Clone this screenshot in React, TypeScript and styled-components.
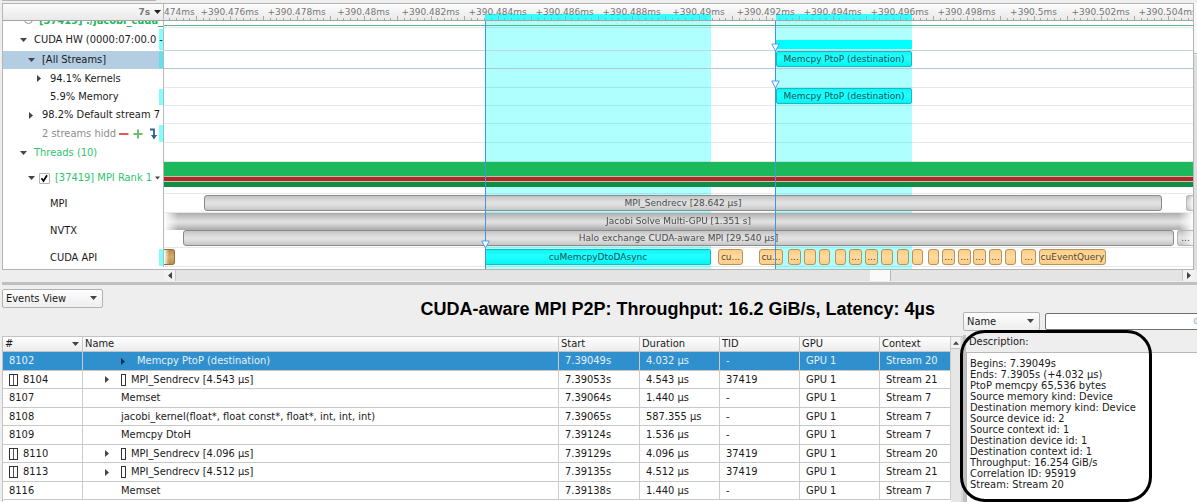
import React from "react";
import styled, { createGlobalStyle, css } from "styled-components";

const GlobalStyle = createGlobalStyle`
  * { box-sizing: border-box; }
  html, body { margin: 0; }
  body {
    background: #eeeeee;
    color: #1a1a1a;
    font: 11px/14px "DejaVu Sans Condensed", "DejaVu Sans", sans-serif;
  }
`;

/* Width of the visible time range, in scale units. */
const RANGE = 1029;
const at = (u: number) => `${(u / RANGE) * 100}%`;
const span = (from: number, to: number) => ({ left: at(from), width: at(to - from) });

const Page = styled.main`
  display: flex;
  flex-direction: column;
  min-height: 100vh;
  overflow: hidden;
`;

/* ---------- timeline ---------- */

const TopStrip = styled.div`
  height: 3px;
  background: linear-gradient(#b4b4b4, #b4b4b4) no-repeat 2px 0 / 154px 1px;
`;

const Timeline = styled.section`
  display: grid;
  grid-template-columns: minmax(0, 1fr) 3px;
  margin-left: 2px;
`;

const TimelineFrame = styled.div`
  position: relative;
  border: 1px solid #b4b4b4;
  background: #ffffff;
`;

const VerticalBar = styled.div`
  background: linear-gradient(#b0b0b0, #b0b0b0) no-repeat 0 50px / 3px 1px,
    linear-gradient(#f8f8f8 0 52px, #dedede 52px);
`;

const Split = styled.div`
  display: grid;
  grid-template-columns: 161px minmax(0, 1fr);
`;

const Ruler = styled(Split)`
  height: 17px;
  border-bottom: 1px solid #a4a4a4;
  background: linear-gradient(#fcfcfc, #e9e9e9);
`;

const RulerOrigin = styled.div`
  display: flex;
  align-items: center;
  justify-content: flex-end;
  gap: 4px;
  padding-right: 2px;
  border-right: 1px solid #b8b8b8;
  color: #777777;
  font: bold 9px/12px "DejaVu Sans", sans-serif;
`;

const Scale = styled.div`
  position: relative;
  overflow: hidden;
`;

const ScaleLabel = styled.span<{ $start?: boolean }>`
  position: absolute;
  z-index: 1;
  top: 2px;
  width: 70px;
  margin-left: ${(p) => (p.$start ? 0 : -35)}px;
  text-align: ${(p) => (p.$start ? "left" : "center")};
  color: #777777;
  font: 9px/12px "DejaVu Sans", sans-serif;
`;

const Tick = styled.i<{ $major: boolean }>`
  position: absolute;
  z-index: 1;
  bottom: 0;
  width: 1px;
  height: ${(p) => (p.$major ? 4 : 2)}px;
  background: #a8a8a8;
`;

const ScaleBand = styled.div`
  position: absolute;
  top: 10px;
  bottom: 0;
  background: #33ffff;
`;

const Rows = styled.div`
  position: relative;
  padding-bottom: 2px;
`;

const Layer = styled.div`
  position: absolute;
  inset: 0 0 0 161px;
  overflow: hidden;
  pointer-events: none;
`;

const Band = styled.div`
  position: absolute;
  top: 0;
  bottom: 0;
  background: #b0ffff;
`;

const Cursor = styled.div`
  position: absolute;
  z-index: 3;
  top: 0;
  bottom: 0;
  width: 1px;
  background: #3f96e4;
`;

const Row = styled(Split)<{ $h: number }>`
  position: relative;
  height: ${(p) => p.$h}px;
`;

const TreeCell = styled.div<{ $level: number; $selected?: boolean; $tone?: string; $mark?: string }>`
  display: flex;
  align-items: center;
  min-width: 0;
  overflow: hidden;
  padding-left: ${(p) => 13 + p.$level * 8}px;
  border-right: 1px solid #b8b8b8;
  white-space: nowrap;
  color: ${(p) => p.$tone ?? "#1a1a1a"};
  background: ${(p) => (p.$selected ? "#b3cde3" : "#ffffff")};
  ${(p) =>
    p.$mark &&
    css`
      background: linear-gradient(${p.$mark}, ${p.$mark}) no-repeat right 0 top 1px / 4px calc(100% - 2px),
        ${p.$selected ? "#b3cde3" : "#ffffff"};
    `}
`;

const TreeLabel = styled.span``;

const Arrow = styled.span`
  display: flex;
  flex: none;
  justify-content: center;
  width: 14px;
  margin-right: 4px;
`;

const RowMenu = styled.span`
  margin-left: 3px;
  line-height: 0;
`;

const CheckBox = styled.input`
  appearance: none;
  flex: none;
  width: 11px;
  height: 11px;
  margin: 0 5px 0 -3px;
  border: 1px solid #b4b4b4;
  border-radius: 1px;
  background: #ffffff
    url("data:image/svg+xml,%3Csvg xmlns='http://www.w3.org/2000/svg' viewBox='0 0 9 9'%3E%3Cpath d='M1.5 4.2 3.5 7 7 1.3' fill='none' stroke='%23000' stroke-width='1.7'/%3E%3C/svg%3E");
`;

const CutRow = styled.div`
  display: flex;
  align-items: flex-end;
  gap: 6px;
  height: 7px;
  overflow: hidden;
  padding-left: 21px;
  border-right: 1px solid #b8b8b8;
  color: #1bb95c;
  font-weight: bold;
  white-space: nowrap;
`;

const CutRing = styled.i`
  flex: none;
  width: 9px;
  height: 9px;
  margin-bottom: 4px;
  border: 1px solid #909090;
  border-radius: 50%;
`;

const Track = styled.div<{ $line?: string }>`
  position: relative;
  min-width: 0;
  overflow: hidden;
  border-bottom: 1px solid ${(p) => p.$line ?? "rgba(0, 0, 0, 0.09)"};
`;

const GreenLine = styled.div`
  height: 1px;
  margin-top: 4px;
  background: #52b787;
`;

type BarKind = "cyan" | "orange" | "brown" | "gray";

const barLook = {
  cyan: css`
    border-color: #19b9bd;
    background: linear-gradient(#12f4f4, #22ffff 40%, #08f4f4);
    color: #0c5555;
  `,
  orange: css`
    border-color: #b5935c;
    border-radius: 3px;
    background: linear-gradient(#ffcd85, #ffdaa0 50%, #ffcd85);
    color: #55452a;
  `,
  brown: css`
    border-color: #8f6f3c;
    border-left: 0;
    border-radius: 0 3px 3px 0;
    background: linear-gradient(90deg, #ffffff, rgba(255, 255, 255, 0) 5px), linear-gradient(#b98f4e, #d4ab68 50%, #b98f4e);
  `,
  gray: css`
    border-color: #8a8a8a;
    border-radius: 3px;
    background: linear-gradient(#c3c3c3, #e2e2e2 45%, #dedede 65%, #c6c6c6);
    color: #4a4a4a;
  `,
};

const Bar = styled.div<{ $kind: BarKind; $top?: number; $open?: boolean }>`
  position: absolute;
  top: ${(p) => p.$top ?? 0}px;
  height: 16px;
  border: 1px solid;
  border-radius: 2px;
  overflow: hidden;
  text-align: center;
  white-space: nowrap;
  font: 9px/14px "DejaVu Sans", sans-serif;
  ${(p) => barLook[p.$kind]}
  ${(p) =>
    p.$open &&
    css`
      border-color: #b4b4b4;
      border-right: 0;
      border-radius: 3px 0 0 3px;
      background: linear-gradient(90deg, rgba(255, 255, 255, 0) 30%, rgba(255, 255, 255, 0.8)),
        linear-gradient(#c3c3c3, #e2e2e2 45%, #dedede 65%, #c6c6c6);
    `}
`;

const WideBar = styled(Bar)`
  height: 17px;
  border-width: 1px 0;
  border-color: #b0b0b0;
  border-radius: 0;
  background: linear-gradient(#b4b4b4, #e2e2e2 50%, #dadada 65%, #b0b0b0);
  mask-image: linear-gradient(90deg, transparent, #000 14px, #000 calc(100% - 14px), transparent);
`;

const SummaryBar = styled.div`
  position: absolute;
  top: 12px;
  height: 9px;
  background: #00ffff;
`;

const Stripes = styled.div`
  height: 25px;
  background: linear-gradient(#1bb95c 0 14px, #c9b9a0 14px 15px, #a92a28 15px 19px, #d0c4b0 19px 20px, #128c43 20px);
`;

const MarkerSvg = styled.svg`
  position: absolute;
  z-index: 4;
  width: 9px;
  height: 9px;
  margin-left: -4px;
`;

const ScrollRow = styled.div`
  display: grid;
  grid-template-columns: 11px minmax(0, 1fr) 11px;
  height: 11px;
  margin: 0 3px 0 164px;
`;

const ScrollButton = styled.button`
  display: flex;
  align-items: center;
  justify-content: center;
  min-width: 0;
  padding: 0;
  border: 0;
  background: #f2f2f2;
`;

const ScrollTrack = styled.div`
  position: relative;
  border: 1px solid #c8c8c8;
  border-width: 0 1px;
  background: #e4e4e4;
`;

const ScrollThumb = styled.div`
  position: absolute;
  top: 0;
  bottom: 0;
  border-right: 1px solid #b4b4b4;
  background: #fafafa;
`;

const Divider = styled.div`
  height: 3px;
  margin: 1px 0 0 2px;
  background: #c0c0c0;
`;

/* ---------- lower half ---------- */

const Lower = styled.section`
  display: grid;
  flex: 1;
  grid-template-columns: minmax(0, 1fr) 234px;
`;

const EventsPane = styled.div`
  display: flex;
  flex-direction: column;
  min-width: 0;
  padding-left: 2px;
`;

const EventsBar = styled.div`
  display: flex;
  align-items: flex-start;
  height: 51px;
  padding-top: 4px;
`;

const SelectBox = styled.span<{ $w: number }>`
  position: relative;
  display: flex;
  flex: none;
  width: ${(p) => p.$w}px;
  height: 19px;

  svg {
    position: absolute;
    top: 7px;
    right: 6px;
    pointer-events: none;
  }
`;

const Select = styled.select`
  appearance: none;
  width: 100%;
  padding: 0 3px;
  border: 1px solid #b2b2b2;
  border-radius: 2px;
  background: linear-gradient(#fdfdfd, #eeeeee);
  color: #1a1a1a;
  font: inherit;
`;

const Title = styled.h1`
  flex: 1;
  margin: 9px 0 0;
  padding-right: 28px;
  text-align: right;
  white-space: nowrap;
  color: #000000;
  font: bold 18px/22px "Liberation Sans", sans-serif;
`;

const TableArea = styled.div`
  display: grid;
  flex: 1;
  grid-template-columns: minmax(0, 1fr) 12px;
`;

const TableFrame = styled.div`
  border: 1px solid #c4c4c4;
  border-width: 1px 0 0 1px;
  background: #ffffff;
`;

const Table = styled.table`
  width: 100%;
  table-layout: fixed;
  border-collapse: separate;
  border-spacing: 0;
`;

const HeadCell = styled.th`
  position: relative;
  height: 15px;
  padding: 0 2px;
  border-right: 1px solid #c8c8c8;
  border-bottom: 1px solid #c4c4c4;
  background: linear-gradient(#ffffff, #ececec);
  text-align: left;
  font-weight: normal;
  line-height: 14px;

  svg {
    position: absolute;
    top: 5px;
    right: 3px;
  }
`;

const BodyRow = styled.tr<{ $selected: boolean }>`
  height: 18px;
  &:nth-child(odd) { height: 19px; }
  color: ${(p) => (p.$selected ? "#e4f1fa" : "#1a1a1a")};
  background: ${(p) => (p.$selected ? "#308fcd" : "#ffffff")};
`;

const Cell = styled.td`
  padding: 0 6px;
  overflow: hidden;
  white-space: nowrap;
  border-right: 1px solid #cccccc;
  border-bottom: 1px solid #c8c8c8;
  line-height: 14px;
`;

const CellLine = styled.span<{ $indent?: number }>`
  display: flex;
  align-items: center;
  padding-left: ${(p) => p.$indent ?? 0}px;
`;

const NestArrow = styled(Arrow)`
  width: 6px;
  margin-right: 11px;
`;

const Brick = styled.i<{ $double?: boolean }>`
  display: flex;
  flex: none;
  width: ${(p) => (p.$double ? 9 : 5)}px;
  height: 12px;
  margin-right: 5px;
  border: 1px solid #333333;
  background: ${(p) => (p.$double ? "linear-gradient(#555555, #555555) no-repeat 3px 0 / 1px 100%" : "#ffffff")};
`;

const TableScroll = styled.div`
  border-top: 1px solid #c4c4c4;
  border-right: 2px solid #d8d8d8;
  background: #e6e6e6;
`;

const UpButton = styled(ScrollButton)`
  width: 9px;
  height: 12px;
  border-bottom: 1px solid #c4c4c4;
`;

const DetailPane = styled.aside`
  position: relative;
  display: flex;
  flex-direction: column;
  min-width: 0;
`;

const FilterBar = styled.div`
  display: flex;
  gap: 5px;
  margin-top: 27px;
`;

const Search = styled.span`
  position: relative;
  display: flex;
  flex: 1;
  min-width: 0;
  overflow: hidden;

  svg {
    position: absolute;
    top: 5px;
    right: -4px;
  }
`;

const SearchInput = styled.input`
  width: calc(100% + 2px);
  height: 17px;
  margin: 1px -2px 0 0;
  border: 1px solid #6e6e6e;
  border-radius: 2px 0 0 2px;
  background: #ffffff;
  font: inherit;
`;

const Details = styled.div`
  display: flex;
  flex: 1;
  flex-direction: column;
  margin-top: 4px;
  border-left: 3px solid #c0c0c0;
`;

const DetailsHead = styled.h2`
  margin: 0;
  padding: 0 0 3px 3px;
  font-size: 11px;
  font-weight: normal;
  line-height: 14px;
`;

const DetailsList = styled.ul`
  flex: 1;
  margin: 0;
  padding: 5px 3px;
  border: 1px solid #b8b8b8;
  border-width: 1px 0 0 1px;
  background: #ffffff;
  list-style: none;
  line-height: 11px;
  white-space: nowrap;
`;

const Highlight = styled.div`
  position: absolute;
  top: 45px;
  bottom: 0;
  left: -3px;
  width: 192px;
  border: 3px solid #000000;
  border-radius: 25px;
  pointer-events: none;
`;

/* ---------- drawings ---------- */

const Down = ({ size = 7, fill = "#444444" }: { size?: number; fill?: string }) => (
  <svg width={size} height="4" viewBox="0 0 7 4" aria-hidden="true">
    <path d="M0 0h7L3.5 4z" fill={fill} />
  </svg>
);
const Up = () => (
  <svg width="6" height="4" viewBox="0 0 7 4" aria-hidden="true">
    <path d="M0 4h7L3.5 0z" fill="#444444" />
  </svg>
);
const Side = ({ left = false, fill = "#444444" }: { left?: boolean; fill?: string }) => (
  <svg width="4" height="7" viewBox="0 0 4 7" aria-hidden="true">
    <path d={left ? "M4 0v7L0 3.5z" : "M0 0v7L4 3.5z"} fill={fill} />
  </svg>
);
const Marker = ({ u, top }: { u: number; top: number }) => (
  <MarkerSvg viewBox="0 0 9 9" style={{ left: at(u), top }} aria-hidden="true">
    <path d="M.8 1h7.400L4.500 8z" fill="#ffffff" stroke="#4a9ff0" />
  </MarkerSvg>
);
const StreamTools = () => (
  <svg width="40" height="12" viewBox="0 0 40 12" aria-hidden="true">
    <path d="M0 6h9.500" stroke="#e8565b" strokeWidth="2" />
    <path d="M14.500 6h9M19 1.500v9" stroke="#6cbf6c" strokeWidth="2" />
    <path d="M31 1.500h4v7" fill="none" stroke="#2d5f96" strokeWidth="1.800" />
    <path d="M32 7h6l-3 4.500z" fill="#2d5f96" />
  </svg>
);

/* ---------- data ---------- */

const FIRST_LABEL = -1.5;
const LABEL_STEP = 67;
const scaleLabels = [
  "+390.476ms", "+390.478ms", "+390.48ms", "+390.482ms", "+390.484ms", "+390.486ms", "+390.488ms",
  "+390.49ms", "+390.492ms", "+390.494ms", "+390.496ms", "+390.498ms", "+390.5ms", "+390.502ms", "+390.504ms",
];
const ticks = Array.from({ length: 154 }, (_, i) => i);

const selections: [number, number][] = [[321, 547], [612, 748]];

const apiCalls: [number, number, string][] = [
  [554, 579, "cu..."], [595, 619, "cu..."], [624, 637, "..."], [640, 652, ""], [655, 666, ""], [671, 682, ""],
  [685, 698, "..."], [701, 714, "..."], [717, 729, ""], [733, 745, ""], [748, 759, ""], [764, 775, ""],
  [778, 791, "..."], [794, 807, "..."], [809, 822, "..."], [825, 838, "..."], [841, 852, ""], [857, 872, "..."],
  [875, 942, "cuEventQuery"],
];

type EventRow = { id: string; name: string; arrow?: boolean; brick?: boolean; cols: string[] };
const events: EventRow[] = [
  { id: "8102", name: "Memcpy PtoP (destination)", arrow: true, cols: ["7.39049s", "4.032 µs", "-", "GPU 1", "Stream 20"] },
  { id: "8104", name: "MPI_Sendrecv [4.543 µs]", arrow: true, brick: true, cols: ["7.39053s", "4.543 µs", "37419", "GPU 1", "Stream 21"] },
  { id: "8107", name: "Memset", cols: ["7.39064s", "1.440 µs", "-", "GPU 1", "Stream 7"] },
  { id: "8108", name: "jacobi_kernel(float*, float const*, float*, int, int, int)", cols: ["7.39065s", "587.355 µs", "-", "GPU 1", "Stream 7"] },
  { id: "8109", name: "Memcpy DtoH", cols: ["7.39124s", "1.536 µs", "-", "GPU 1", "Stream 7"] },
  { id: "8110", name: "MPI_Sendrecv [4.096 µs]", arrow: true, brick: true, cols: ["7.39129s", "4.096 µs", "37419", "GPU 1", "Stream 20"] },
  { id: "8113", name: "MPI_Sendrecv [4.512 µs]", arrow: true, brick: true, cols: ["7.39135s", "4.512 µs", "37419", "GPU 1", "Stream 21"] },
  { id: "8116", name: "Memset", cols: ["7.39138s", "1.440 µs", "-", "GPU 1", "Stream 7"] },
];
const columns: [string, string][] = [
  ["#", "80px"], ["Name", "auto"], ["Start", "81px"], ["Duration", "80px"], ["TID", "80px"], ["GPU", "80px"], ["Context", "71px"],
];
const details = [
  "Begins: 7.39049s", "Ends: 7.3905s (+4.032 µs)", "PtoP memcpy 65,536 bytes", "Source memory kind: Device",
  "Destination memory kind: Device", "Source device id: 2", "Source context id: 1", "Destination device id: 1",
  "Destination context id: 1", "Throughput: 16.254 GiB/s", "Correlation ID: 95919", "Stream: Stream 20",
];

const GREEN = "#2fc46e";

export default function App() {
  return (
    <Page>
      <GlobalStyle />
      <TopStrip />
      <Timeline>
        <TimelineFrame>
          <Ruler>
            <RulerOrigin>7s <Down fill="#222222" /></RulerOrigin>
            <Scale>
              {selections.map(([a, b]) => <ScaleBand key={a} style={span(a, b)} />)}
              {ticks.map((i) => (
                <Tick key={i} $major={i % 5 === 0} style={{ left: at(FIRST_LABEL + (i * LABEL_STEP) / 10) }} />
              ))}
              <ScaleLabel $start>474ms</ScaleLabel>
              {scaleLabels.map((t, i) => (
                <ScaleLabel key={t} style={{ left: at(FIRST_LABEL + (i + 1) * LABEL_STEP) }}>{t}</ScaleLabel>
              ))}
            </Scale>
          </Ruler>
          <Rows>
            <Layer>{selections.map(([a, b]) => <Band key={a} style={span(a, b)} />)}</Layer>
            <Row $h={7}>
              <CutRow><CutRing />[37419] ./jacobi_cuda_</CutRow>
              <Track><GreenLine /></Track>
            </Row>
            <Row $h={23}>
              <TreeCell $level={0} $mark="#80ffff">
                <Arrow><Down /></Arrow><TreeLabel>CUDA HW (0000:07:00.0 -</TreeLabel>
              </TreeCell>
              <Track $line="#c3d5e3"><SummaryBar style={span(612, 748)} /></Track>
            </Row>
            <Row $h={18}>
              <TreeCell $level={1} $selected $mark="#5ae2ee">
                <Arrow><Down /></Arrow><TreeLabel>[All Streams]</TreeLabel>
              </TreeCell>
              <Track $line="#b0c6d9"><Bar $kind="cyan" style={span(612, 748)}>Memcpy PtoP (destination)</Bar></Track>
            </Row>
            <Row $h={19}>
              <TreeCell $level={2}><Arrow><Side /></Arrow><TreeLabel>94.1% Kernels</TreeLabel></TreeCell>
              <Track />
            </Row>
            <Row $h={18}>
              <TreeCell $level={2} $mark="#80ffff"><Arrow /><TreeLabel>5.9% Memory</TreeLabel></TreeCell>
              <Track><Bar $kind="cyan" style={span(612, 748)}>Memcpy PtoP (destination)</Bar></Track>
            </Row>
            <Row $h={18}>
              <TreeCell $level={1}><Arrow><Side /></Arrow><TreeLabel>98.2% Default stream 7</TreeLabel></TreeCell>
              <Track />
            </Row>
            <Row $h={19}>
              <TreeCell $level={1} $tone="#8c8c8c" $mark="#80ffff">
                <Arrow /><TreeLabel>2 streams hidd</TreeLabel><RowMenu><StreamTools /></RowMenu>
              </TreeCell>
              <Track />
            </Row>
            <Row $h={19}>
              <TreeCell $level={0} $tone={GREEN}><Arrow><Down /></Arrow><TreeLabel>Threads (10)</TreeLabel></TreeCell>
              <Track />
            </Row>
            <Row $h={32}>
              <TreeCell $level={1} $tone={GREEN}>
                <Arrow><Down /></Arrow>
                <CheckBox type="checkbox" defaultChecked aria-label="[37419] MPI Rank 1" />
                <TreeLabel>[37419] MPI Rank 1</TreeLabel>
                <RowMenu><Down size={5} /></RowMenu>
              </TreeCell>
              <Track><Stripes /></Track>
            </Row>
            <Row $h={19}>
              <TreeCell $level={2}><Arrow /><TreeLabel>MPI</TreeLabel></TreeCell>
              <Track>
                <Bar $kind="gray" $top={1} style={span(40, 998)}>MPI_Sendrecv [28.642 µs]</Bar>
                <Bar $kind="gray" $top={1} $open style={span(1022, 1029)} />
              </Track>
            </Row>
            <Row $h={35}>
              <TreeCell $level={2}><Arrow /><TreeLabel>NVTX</TreeLabel></TreeCell>
              <Track>
                <WideBar $kind="gray" style={span(0, 1029)}>Jacobi Solve Multi-GPU [1.351 s]</WideBar>
                <Bar $kind="gray" $top={17} style={span(19, 1010)}>Halo exchange CUDA-aware MPI [29.540 µs]</Bar>
                <Bar $kind="gray" $top={17} $open style={span(1013, 1029)}>...</Bar>
              </Track>
            </Row>
            <Row $h={19}>
              <TreeCell $level={2} $mark="#80ffff"><Arrow /><TreeLabel>CUDA API</TreeLabel></TreeCell>
              <Track>
                <Bar $kind="brown" $top={1} style={span(0, 11)} />
                <Bar $kind="cyan" $top={1} style={span(321, 547)}>cuMemcpyDtoDAsync</Bar>
                {apiCalls.map(([a, b, t]) => <Bar key={a} $kind="orange" $top={1} style={span(a, b)}>{t}</Bar>)}
              </Track>
            </Row>
            <Layer>
              <Cursor style={{ left: at(321) }} />
              <Cursor style={{ left: at(611) }} />
              <Marker u={611} top={22} />
              <Marker u={611} top={59} />
              <Marker u={321} top={219} />
            </Layer>
          </Rows>
        </TimelineFrame>
        <VerticalBar />
      </Timeline>
      <ScrollRow>
        <ScrollButton aria-label="Scroll left"><Side left /></ScrollButton>
        <ScrollTrack><ScrollThumb style={{ left: "69%", width: "2.1%" }} /></ScrollTrack>
        <ScrollButton aria-label="Scroll right"><Side /></ScrollButton>
      </ScrollRow>
      <Divider />
      <Lower>
        <EventsPane>
          <EventsBar>
            <SelectBox $w={101}>
              <Select aria-label="View" defaultValue="Events View"><option>Events View</option></Select>
              <Down />
            </SelectBox>
            <Title>CUDA-aware MPI P2P: Throughput: 16.2 GiB/s, Latency: 4µs</Title>
          </EventsBar>
          <TableArea>
            <TableFrame>
              <Table>
                <colgroup>{columns.map(([n, w]) => <col key={n} style={{ width: w }} />)}</colgroup>
                <thead>
                  <tr>{columns.map(([n], i) => <HeadCell key={n} scope="col">{n}{i === 0 && <Down />}</HeadCell>)}</tr>
                </thead>
                <tbody>
                  {events.map((e, i) => (
                    <BodyRow key={e.id} $selected={i === 0}>
                      <Cell><CellLine>{e.brick && <Brick $double />}{e.id}</CellLine></Cell>
                      <Cell>
                        <CellLine $indent={e.arrow ? (e.brick ? 15 : 31) : 32}>
                          {e.arrow && <NestArrow><Side fill={i === 0 ? "#12304a" : "#444444"} /></NestArrow>}
                          {e.brick && <Brick />}
                          {e.name}
                        </CellLine>
                      </Cell>
                      {e.cols.map((c, j) => <Cell key={j}>{c}</Cell>)}
                    </BodyRow>
                  ))}
                </tbody>
              </Table>
            </TableFrame>
            <TableScroll><UpButton aria-label="Scroll up"><Up /></UpButton></TableScroll>
          </TableArea>
        </EventsPane>
        <DetailPane>
          <FilterBar>
            <SelectBox $w={77}>
              <Select aria-label="Filter by" defaultValue="Name"><option>Name</option></Select>
              <Down />
            </SelectBox>
            <Search>
              <SearchInput type="text" aria-label="Filter events" />
              <svg width="8" height="8" viewBox="0 0 8 8" aria-hidden="true">
                <circle cx="4" cy="4" r="3" fill="#dbe8f5" stroke="#a9bdd3" />
              </svg>
            </Search>
          </FilterBar>
          <Details>
            <DetailsHead>Description:</DetailsHead>
            <DetailsList>{details.map((d) => <li key={d}>{d}</li>)}</DetailsList>
          </Details>
          <Highlight />
        </DetailPane>
      </Lower>
    </Page>
  );
}
